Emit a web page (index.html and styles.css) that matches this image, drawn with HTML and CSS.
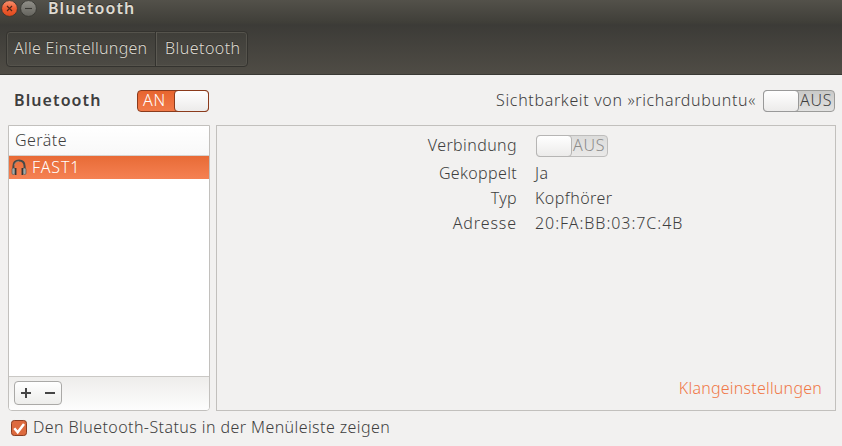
FILE: index.html
```html
<!DOCTYPE html>
<html lang="de">
<head>
<meta charset="utf-8">
<title>Bluetooth</title>
<link rel="stylesheet" href="styles.css">
</head>
<body>
<header class="window-header">
  <div class="titlebar">
    <svg class="window-buttons" width="40" height="19" viewBox="0 0 40 19">
      <defs>
        <linearGradient id="close" x2="0" y2="1"><stop stop-color="#f79270"/><stop offset=".5" stop-color="#ef5e34"/><stop offset="1" stop-color="#df4a1c"/></linearGradient>
        <linearGradient id="minimize" x2="0" y2="1"><stop stop-color="#92918a"/><stop offset="1" stop-color="#64635d"/></linearGradient>
      </defs>
      <circle cx="9.5" cy="8.5" r="7.9" fill="url(#close)" stroke="#34332e" stroke-width=".8"/>
      <path d="M7 6l5 5M12 6l-5 5" stroke="#51291b" stroke-width="1.2"/>
      <circle cx="28.5" cy="8.5" r="7.9" fill="url(#minimize)" stroke="#34332e" stroke-width=".8"/>
      <path d="M25 8.5h7" stroke="#3a3934" stroke-width="1.1"/>
    </svg>
    <span class="window-title">Bluetooth</span>
  </div>
  <nav class="path-bar">
    <span class="path-item path-all">Alle Einstellungen</span>
    <span class="path-item path-current">Bluetooth</span>
  </nav>
</header>
<main>
  <div class="top-row">
    <span class="heading">Bluetooth</span>
    <div class="switch on"><span class="state">AN</span><span class="knob"></span></div>
    <span class="visibility">Sichtbarkeit von »richardubuntu«</span>
    <div class="switch"><span class="knob"></span><span class="state">AUS</span></div>
  </div>
  <div class="columns">
    <section class="devices">
      <div class="list-header">Geräte</div>
      <div class="device">
        <svg width="16" height="18" viewBox="0 0 16 18">
          <path d="M2.4 12V7.2C2.4 3.6 4.4 1.5 8 1.5s5.600 2.100 5.600 5.700V12" fill="none" stroke="#454a49" stroke-width="2"/>
          <path d="M3.300 6.500C4 3.200 5.500 2.400 8 2.400" fill="none" stroke="#a49a91" stroke-width=".6"/>
          <rect x="1" y="9" width="3" height="6.500" rx="1.300" fill="#a5a9a5" stroke="#4a4b49" stroke-width=".6"/>
          <rect x="12" y="9" width="3" height="6.500" rx="1.300" fill="#a5a9a5" stroke="#4a4b49" stroke-width=".6"/>
          <path d="M4.700 9v7M11.300 9v7" stroke="#343635" stroke-width="1.500"/>
        </svg>
        <span class="device-name">FAST1</span>
      </div>
      <div class="list-space"></div>
      <div class="list-toolbar">
        <div class="add-remove">
          <svg width="46" height="23" viewBox="0 0 46 23"><path d="M6 12h10M11 7v10M30 12h10" stroke="#454545" stroke-width="2"/></svg>
        </div>
      </div>
    </section>
    <section class="details">
      <div class="properties">
        <span class="label verbindung">Verbindung</span>
        <div class="switch disabled"><span class="knob"></span><span class="state">AUS</span></div>
        <span class="label gekoppelt">Gekoppelt</span><span>Ja</span>
        <span class="label typ">Typ</span><span class="kopf">Kopfhörer</span>
        <span class="label adresse">Adresse</span><span class="address">20:FA:BB:03:7C:4B</span>
      </div>
      <span class="sound-link">Klangeinstellungen</span>
    </section>
  </div>
  <div class="status-row">
    <svg width="18" height="18" viewBox="0 0 18 18">
      <rect x="1.500" y="1.500" width="15" height="15" rx="2.800" fill="#dd6a3e" stroke="#8b3c20"/>
      <path d="M4.300 9.200l3.400 4L14 5" fill="none" stroke="#fff" stroke-width="2.500"/>
    </svg>
    <span class="status-label">Den Bluetooth-Status in der Menüleiste zeigen</span>
  </div>
</main>
</body>
</html>
```
FILE: styles.css
```css
* { box-sizing: border-box; }
body {
  margin: 0;
  width: 842px;
  height: 446px;
  overflow: hidden;
  background: #f2f1f0;
  color: #3e3e3e;
  font: 300 16px/24px "Noto Sans", sans-serif;
  letter-spacing: .45px;
  white-space: nowrap;
}
svg { display: block; flex: none; }
.window-header {
  height: 75px;
  color: #dfdbd2;
  background: linear-gradient(#53514a 0, #403f39 22px, #3c3b37 25px, #4f4c45 100%);
  border-bottom: 1px solid #3a3934;
}
.titlebar { display: flex; height: 31px; }
.window-title {
  height: 16px;
  line-height: 16px;
  margin-left: 8px;
  font-weight: 600;
  letter-spacing: 1.08px;
  text-shadow: 0 -1px #302f2b;
}
.path-bar {
  display: flex;
  width: 242px;
  height: 36px;
  margin-left: 6px;
  border: 1px solid #34332f;
  border-radius: 4px;
  background: linear-gradient(#3f3e39, #4d4b45);
  box-shadow: inset 0 0 0 1px #55534c;
  line-height: 32px;
  text-shadow: 0 -1px #302f2b;
}
.path-all { width: 149px; padding-left: 7px; letter-spacing: .27px; border-right: 1px solid #33322e; }
.path-current { flex: 1; padding-left: 8px; border-left: 1px solid #5c5a53; }
.top-row { display: flex; align-items: center; height: 50px; padding: 2px 7px 0 14px; }
.heading { width: 123px; padding-bottom: 2px; font-weight: 600; letter-spacing: 1.1px; }
.switch {
  display: flex;
  width: 72px;
  height: 22px;
  border: 1px solid #9b9b99;
  border-radius: 4px;
  background: linear-gradient(#c9c9c8, #e2e2e1);
  line-height: 18px;
  letter-spacing: .7px;
}
.knob {
  width: 36px;
  height: 22px;
  margin: -1px;
  border: 1px solid #999;
  border-radius: 4px;
  background: linear-gradient(#fff, #ecebea);
  flex: none;
}
.state { width: 36px; padding-left: 2px; }
.on { border-color: #8b3b1c; background: linear-gradient(#e7652f, #f27a49); color: #fff; }
.on .state { width: 37px; padding-left: 5px; flex: none; }
.on .knob { width: 35px; border-color: #8b3b1c; }
.disabled { border-color: #bebdbc; background: linear-gradient(#dcdcdb, #eae9e8); color: #8c8b8a; }
.disabled .knob { border-color: #b6b5b4; }
.visibility { margin-left: auto; margin-right: 7px; padding-bottom: 2px; letter-spacing: .65px; }
.columns { display: flex; gap: 6px; height: 286px; padding: 0 6px 0 8px; }
.devices {
  display: flex;
  flex-direction: column;
  width: 202px;
  border: 1px solid #c2c0bd;
  border-radius: 0 0 4px 4px;
  background: #fff;
}
.list-header { height: 30px; padding-left: 6px; line-height: 29px; background: linear-gradient(#fff, #f8f8f8); border-bottom: 1px solid #d5d2cf; }
.device { display: flex; align-items: center; gap: 5px; height: 23px; padding-left: 2px; color: #fff; background: linear-gradient(#e86b36, #f58153); }
.device-name { padding-bottom: 2px; letter-spacing: .9px; }
.list-space { flex: 1; }
.list-toolbar { height: 34px; padding: 4px 5px; border-top: 1px solid #cac8c5; border-radius: 0 0 3px 3px; background: linear-gradient(#eeedeb, #fdfdfd); }
.add-remove { width: 48px; height: 24px; border: 1px solid #aaa9a7; border-radius: 4px; background: linear-gradient(#fff, #ededeb); }
.add-remove svg { margin-top: -1px; }
.details { display: flex; flex-direction: column; justify-content: space-between; flex: 1; border: 1px solid #c2c0bd; padding: 6px 13px 10px 0; }
.properties { display: grid; grid-template-columns: 300px auto; column-gap: 18px; grid-template-rows: 28px 25px 25px 25px; align-items: center; }
.label { text-align: right; letter-spacing: .35px; }
.verbindung { padding-bottom: 2px; letter-spacing: .4px; }
.adresse { letter-spacing: .9px; }
.kopf { letter-spacing: .45px; }
.properties .switch { align-self: start; margin: 3px 0 0 1px; }
.address { letter-spacing: .95px; }
.sound-link { align-self: flex-end; color: #f07746; letter-spacing: .22px; }
.status-row { display: flex; align-items: center; gap: 5px; height: 34px; padding-left: 10px; }
.status-label { padding-bottom: 2px; letter-spacing: .42px; }
```
